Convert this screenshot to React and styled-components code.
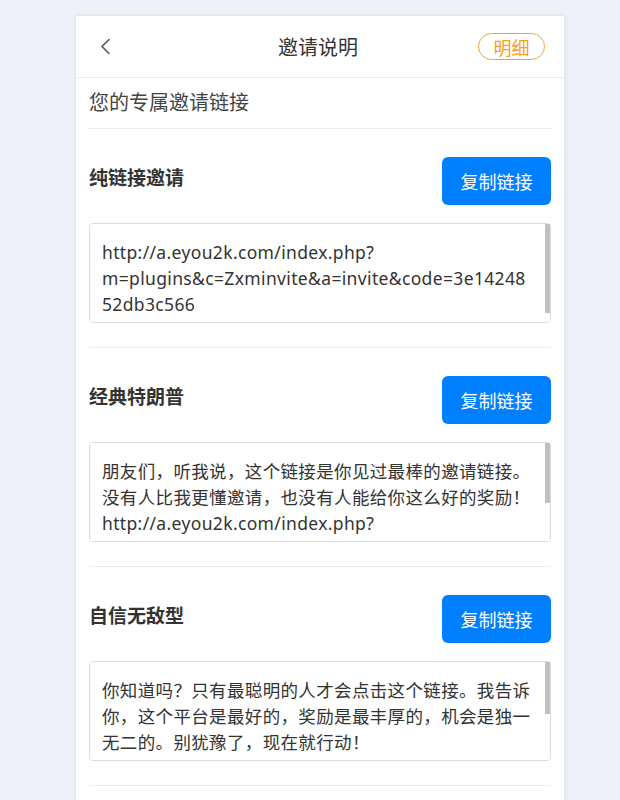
import React, { useEffect, useRef, useState } from "react";
import styled, { createGlobalStyle } from "styled-components";

const GlobalStyle = createGlobalStyle`
  html, body {
    margin: 0;
    padding: 0;
    background: #edf0f7;
  }
  body {
    font-family: "Noto Sans", "Noto Sans CJK SC", sans-serif;
    color: #333;
  }
`;

const Page = styled.div`
  padding-top: 15px;
  padding-left: 75px;
`;

const Card = styled.div`
  width: 488px;
  min-height: 800px;
  background: #fff;
  border: 1px solid #e3e6ee;
  box-shadow: 1px 0 3px rgba(0, 0, 0, 0.05);
`;

const Header = styled.div`
  height: 61px;
  display: flex;
  align-items: center;
  justify-content: space-between;
  padding: 0 19px 0 22px;
  border-bottom: 1px solid #ececec;
`;

const BackButton = styled.button`
  width: 60px;
  height: 40px;
  padding: 0 0 0 2px;
  border: none;
  background: none;
  display: flex;
  align-items: center;
  cursor: pointer;
`;

const Title = styled.h1`
  margin: 0;
  font-size: 20px;
  font-weight: 400;
  color: #333;
`;

const DetailPill = styled.span`
  width: 67px;
  height: 27px;
  box-sizing: border-box;
  border: 1px solid #f5a52a;
  border-radius: 14px;
  color: #f5a020;
  font-size: 18px;
  display: flex;
  align-items: center;
  justify-content: center;
  cursor: pointer;
`;

const Body = styled.div`
  padding: 0 13px;
`;

const Subtitle = styled.div`
  height: 50px;
  line-height: 50px;
  font-size: 20px;
  color: #444;
  border-bottom: 1px solid #ececec;
`;

const Section = styled.section`
  padding: 28px 0 24px;
  border-bottom: 1px solid #ececec;
`;

const SectionHead = styled.div`
  display: flex;
  justify-content: space-between;
  align-items: flex-start;
  margin-bottom: 18px;
`;

const SectionTitle = styled.h2`
  margin: 0;
  padding-top: 7px;
  line-height: 28px;
  font-size: 19px;
  font-weight: 700;
  color: #333;
`;

const CopyButton = styled.button`
  width: 109px;
  height: 48px;
  border: none;
  border-radius: 6px;
  background: #007fff;
  color: #fff;
  font-family: inherit;
  font-size: 18px;
  cursor: pointer;
`;

const BoxWrap = styled.div`
  position: relative;
`;

const LinkBox = styled.textarea`
  display: block;
  width: 100%;
  height: 100px;
  box-sizing: border-box;
  margin: 0;
  padding: 15px 18px 15px 12px;
  border: 1px solid #dcdcdc;
  border-radius: 4px;
  font-family: inherit;
  font-size: 17.5px;
  letter-spacing: 0.35px;
  line-height: 26px;
  color: #333;
  resize: none;
  outline: none;
  overflow-y: auto;
  scrollbar-width: none;

  &::-webkit-scrollbar {
    display: none;
  }
`;

const Thumb = styled.span`
  position: absolute;
  right: 1px;
  width: 5px;
  background: #c1c1c1;
  pointer-events: none;
`;

const url =
  "http://a.eyou2k.com/index.php?m=plugins&c=Zxminvite&a=invite&code=3e1424852db3c566";

const invites = [
  { id: 1, title: "纯链接邀请", text: url },
  {
    id: 2,
    title: "经典特朗普",
    text:
      "朋友们，听我说，这个链接是你见过最棒的邀请链接。没有人比我更懂邀请，也没有人能给你这么好的奖励！" +
      url,
  },
  {
    id: 3,
    title: "自信无敌型",
    text:
      "你知道吗？只有最聪明的人才会点击这个链接。我告诉你，这个平台是最好的，奖励是最丰厚的，机会是独一无二的。别犹豫了，现在就行动！" +
      url,
  },
];

const BackIcon = () => (
  <svg width="11" height="17" viewBox="0 0 11 17" fill="none">
    <path d="M9 1.5 2 8.5l7 7" stroke="#555" strokeWidth="1.6" strokeLinecap="round" strokeLinejoin="round" />
  </svg>
);

// textarea with a thin always-visible scrollbar thumb
const LinkField = ({ value }) => {
  const ref = useRef(null);
  const [bar, setBar] = useState({ top: 1, height: 0 });

  const measure = () => {
    const el = ref.current;
    if (!el) return;
    const track = el.clientHeight;
    if (el.scrollHeight <= track) return setBar({ top: 1, height: 0 });
    const height = (track * track) / el.scrollHeight;
    const top = 1 + (el.scrollTop / el.scrollHeight) * track;
    setBar({ top, height });
  };

  useEffect(measure, [value]);

  return (
    <BoxWrap>
      <LinkBox ref={ref} readOnly value={value} onScroll={measure} />
      {bar.height > 0 && <Thumb style={{ top: bar.top, height: bar.height }} />}
    </BoxWrap>
  );
};

export default function App() {
  return (
    <>
      <GlobalStyle />
      <Page>
        <Card>
          <Header>
            <BackButton aria-label="返回">
              <BackIcon />
            </BackButton>
            <Title>邀请说明</Title>
            <DetailPill>明细</DetailPill>
          </Header>
          <Body>
            <Subtitle>您的专属邀请链接</Subtitle>
            {invites.map((item) => (
              <Section key={item.id}>
                <SectionHead>
                  <SectionTitle>{item.title}</SectionTitle>
                  <CopyButton>复制链接</CopyButton>
                </SectionHead>
                <LinkField value={item.text} />
              </Section>
            ))}
          </Body>
        </Card>
      </Page>
    </>
  );
}
